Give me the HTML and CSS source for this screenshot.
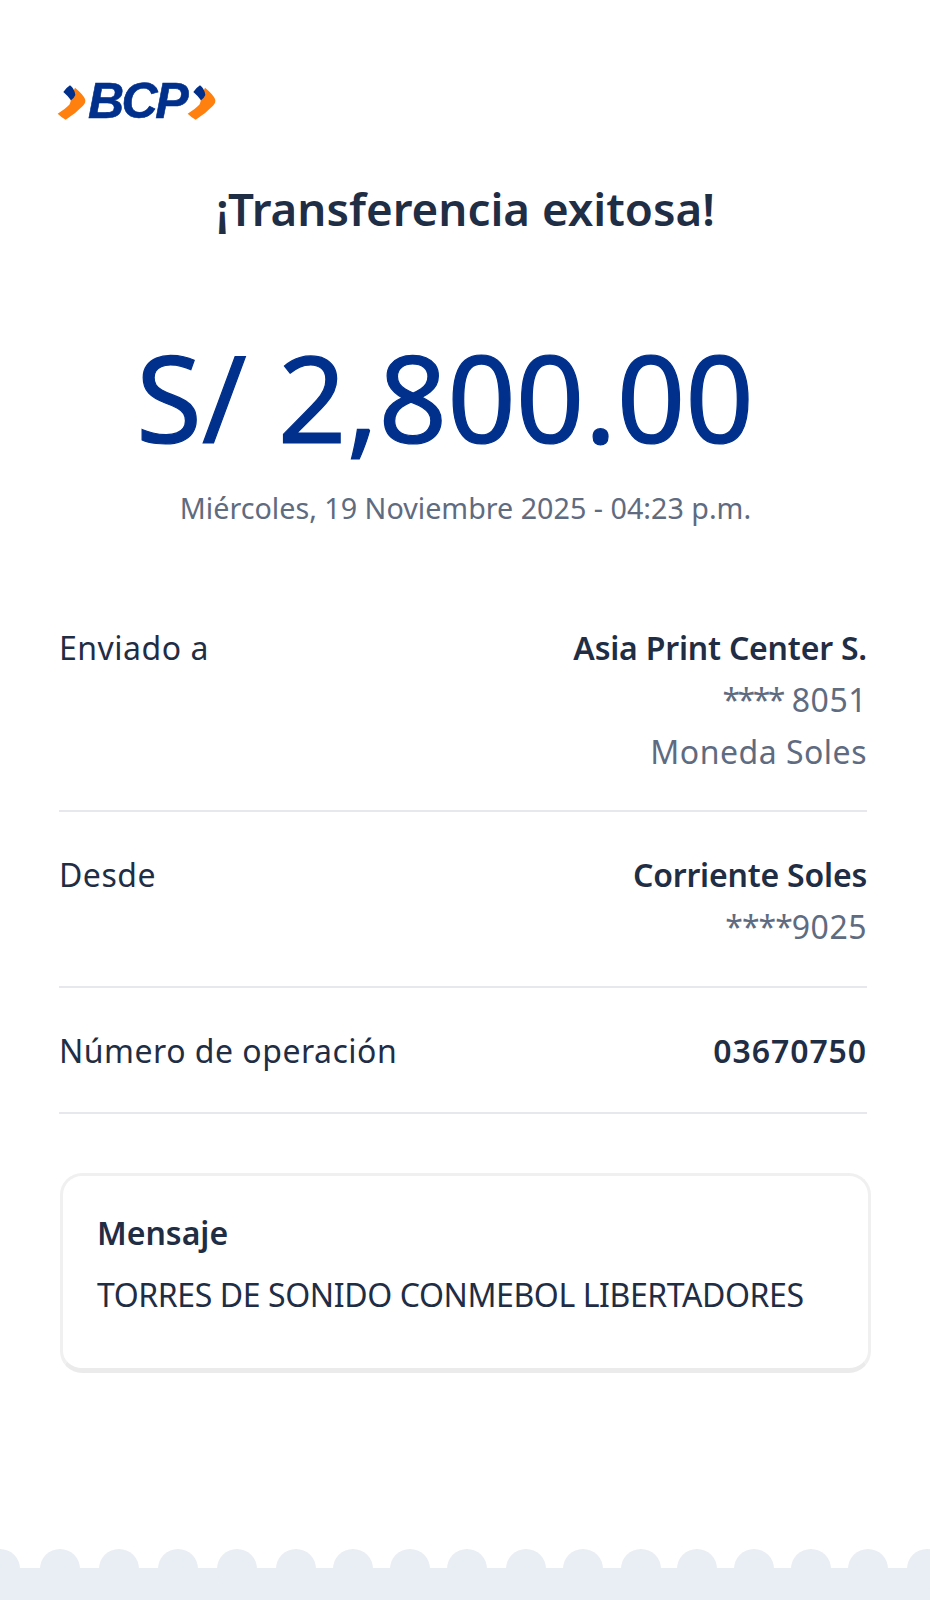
FILE: index.html
```html
<!DOCTYPE html>
<html lang="es">
<head>
<meta charset="utf-8">
<title>Transferencia exitosa</title>
<link rel="stylesheet" href="styles.css">
</head>
<body>
<div class="page">
    <div class="logo">
        <svg class="chevron" viewBox="0 0 90 108"><path fill="#ff7f0f" d="M54 8 Q78 28 84 42 Q88 52 78 62 Q55 86 26 104 Q12 96 2 86 Q28 70 38 58 Q44 50 40 40 Z"/><path fill="#00308c" d="M19 21 Q28 8 39 1 Q52 10 55 30 Q52 38 42 46 Q32 32 19 21 Z"/></svg>
        <span class="logo-text">BCP</span>
        <svg class="chevron" viewBox="0 0 90 108"><path fill="#ff7f0f" d="M54 8 Q78 28 84 42 Q88 52 78 62 Q55 86 26 104 Q12 96 2 86 Q28 70 38 58 Q44 50 40 40 Z"/><path fill="#00308c" d="M19 21 Q28 8 39 1 Q52 10 55 30 Q52 38 42 46 Q32 32 19 21 Z"/></svg>
    </div>

    <h1 class="title">¡Transferencia exitosa!</h1>
    <div class="amount">S/ 2,800.00</div>
    <div class="date">Miércoles, 19 Noviembre 2025 - 04:23 p.m.</div>

    <div class="row row-first">
        <div class="label">Enviado a</div>
        <div class="value">
            <div class="strong">Asia Print Center S.</div>
            <div class="muted"><span class="stars">****</span> 8051</div>
            <div class="muted">Moneda Soles</div>
        </div>
    </div>
    <div class="row row-mid">
        <div class="label">Desde</div>
        <div class="value">
            <div class="strong">Corriente Soles</div>
            <div class="muted"><span class="stars stars-tight">****</span>9025</div>
        </div>
    </div>
    <div class="row row-last">
        <div class="label">Número de operación</div>
        <div class="value">
            <div class="strong digits">03670750</div>
        </div>
    </div>

    <div class="card">
        <div class="card-title">Mensaje</div>
        <div class="card-text">TORRES DE SONIDO CONMEBOL LIBERTADORES</div>
    </div>
</div>

<svg class="scallops" viewBox="0 0 930 51" width="930" height="51">
    <rect x="0" y="19" width="930" height="32" fill="#e9edf4"/>
    <g fill="#e9edf4">
        <circle cx="0" cy="20" r="20"/><circle cx="60" cy="20" r="20"/><circle cx="119" cy="20" r="20"/>
        <circle cx="178" cy="20" r="20"/><circle cx="237" cy="20" r="20"/><circle cx="296" cy="20" r="20"/>
        <circle cx="353" cy="20" r="20"/><circle cx="410" cy="20" r="20"/><circle cx="467" cy="20" r="20"/>
        <circle cx="526" cy="20" r="20"/><circle cx="583" cy="20" r="20"/><circle cx="641" cy="20" r="20"/>
        <circle cx="697" cy="20" r="20"/><circle cx="754" cy="20" r="20"/><circle cx="811" cy="20" r="20"/>
        <circle cx="868" cy="20" r="20"/><circle cx="927" cy="20" r="20"/>
    </g>
</svg>
</body>
</html>
```

FILE: styles.css
```css
html, body {
    margin: 0;
    padding: 0;
    background: #fff;
}
body {
    width: 930px;
    height: 1600px;
    position: relative;
    overflow: hidden;
    font-family: "Noto Sans", sans-serif;
    color: #1f2d45;
}
.page {
    padding: 80px 63px 0 59px;
}
.logo {
    display: flex;
    align-items: center;
    height: 42px;
}
.chevron {
    width: 30px;
    height: 36px;
    margin-top: 3px;
    flex: none;
}
.logo .chevron:first-child {
    margin-left: -2px;
}
.logo-text {
    font-family: "Liberation Sans", sans-serif;
    font-weight: bold;
    font-style: italic;
    font-size: 50px;
    line-height: 42px;
    color: #00308c;
    letter-spacing: -2.5px;
    margin: 0 1px 0 1px;
    -webkit-text-stroke: 0.6px #00308c;
}
.title {
    margin: 56px 0 0 0;
    padding-left: 5px;
    text-align: center;
    font-size: 45.7px;
    font-weight: 600;
    line-height: 60px;
}
.amount {
    margin: 89px 0 0 0;
    padding-right: 36px;
    text-align: center;
    font-size: 120px;
    -webkit-text-stroke: 1.2px #00308c;
    line-height: 140px;
    color: #00308c;
}
.date {
    margin-top: 21px;
    padding-left: 5px;
    text-align: center;
    font-size: 28.7px;
    line-height: 40px;
    color: #5f6b80;
}
.row {
    display: flex;
    justify-content: space-between;
    padding: 36px 0 33px 0;
    border-bottom: 2px solid #e6e8ec;
    font-size: 32px;
    line-height: 52px;
}
.row-first {
    margin-top: 70px;
    padding-top: 24px;
    padding-bottom: 32px;
}
.row-mid {
    padding-top: 37px;
    padding-bottom: 33px;
}
.row-last {
    padding-top: 37px;
    padding-bottom: 35px;
}
.label {
    letter-spacing: 0.5px;
}
.value {
    text-align: right;
}
.strong {
    font-weight: 600;
    letter-spacing: -0.2px;
}
.digits {
    letter-spacing: 0.9px;
}
.muted {
    color: #5f6b80;
    letter-spacing: 0.5px;
}
.stars {
    letter-spacing: -2.5px;
}
.stars-tight {
    letter-spacing: -1px;
}
.card {
    margin: 59px -4px 0 1px;
    padding: 35px 34px 43px 34px;
    border: 3px solid #f0f0f0;
    border-bottom: 5px solid #ebebeb;
    border-radius: 22px;
    font-size: 32px;
    line-height: 60px;
}
.card-title {
    font-weight: 600;
    line-height: 44px;
    margin-bottom: 10px;
}
.card-text {
    white-space: nowrap;
    letter-spacing: -0.4px;
}
.scallops {
    position: absolute;
    left: 0;
    bottom: 0;
    display: block;
}
```
